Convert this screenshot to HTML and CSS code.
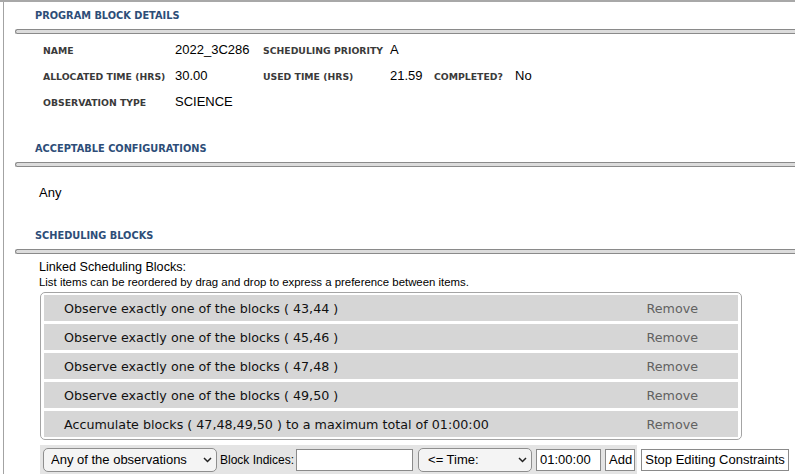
FILE: index.html
```html
<!doctype html>
<html>
<head>
<meta charset="utf-8">
<link rel="stylesheet" href="styles.css">
<title>Program Block</title>
</head>
<body>

<div id="page">
<div id="panel">

	<div class="sec-head">
		<h2>PROGRAM BLOCK DETAILS</h2>
		<div class="rule"></div>
	</div>
	<div id="details">
		<span class="lbl first">NAME</span>
		<span class="val">2022_3C286</span>
		<span class="lbl">SCHEDULING PRIORITY</span>
		<span class="val">A</span>

		<span class="lbl first">ALLOCATED TIME (HRS)</span>
		<span class="val">30.00</span>
		<span class="lbl">USED TIME (HRS)</span>
		<span class="val">21.59</span>
		<span class="lbl">COMPLETED?</span>
		<span class="val">No</span>

		<span class="lbl first">OBSERVATION TYPE</span>
		<span class="val">SCIENCE</span>
	</div>

	<div class="sec-head">
		<h2>ACCEPTABLE CONFIGURATIONS</h2>
		<div class="rule"></div>
	</div>
	<div id="configs">Any</div>

	<div class="sec-head">
		<h2>SCHEDULING BLOCKS</h2>
		<div class="rule"></div>
	</div>
	<div id="blocks">
		<div class="linked-title">Linked Scheduling Blocks:</div>
		<div class="linked-hint">List items can be reordered by drag and drop to express a preference between items.</div>

		<ul id="linked">
			<li><span>Observe exactly one of the blocks ( 43,44 )</span><a class="remove">Remove</a></li>
			<li><span>Observe exactly one of the blocks ( 45,46 )</span><a class="remove">Remove</a></li>
			<li><span>Observe exactly one of the blocks ( 47,48 )</span><a class="remove">Remove</a></li>
			<li><span>Observe exactly one of the blocks ( 49,50 )</span><a class="remove">Remove</a></li>
			<li><span>Accumulate blocks ( 47,48,49,50 ) to a maximum total of 01:00:00</span><a class="remove">Remove</a></li>
		</ul>

		<div id="constraint-bar">
			<div id="adder">
				<div class="sel sel-kind">
					<select><option>Any of the observations</option></select>
					<svg class="chev" width="9" height="6" viewBox="0 0 9 6"><path d="M1 1 L4.5 4.5 L8 1" fill="none" stroke="#222" stroke-width="1.5"/></svg>
				</div>
				<label class="idx-lbl">Block Indices:</label>
				<input type="text" class="idx">
				<div class="sel sel-op">
					<select><option>&lt;= Time:</option></select>
					<svg class="chev" width="9" height="6" viewBox="0 0 9 6"><path d="M1 1 L4.5 4.5 L8 1" fill="none" stroke="#222" stroke-width="1.5"/></svg>
				</div>
				<input type="text" class="time" value="01:00:00">
				<button class="btn add">Add</button>
			</div>
			<button class="btn stop">Stop Editing Constraints</button>
		</div>
	</div>

</div>
</div>

</body>
</html>
```

FILE: styles.css
```css
*
{
	margin:0;
	padding:0;
	box-sizing:border-box;
}
body
{
	font-family:"Liberation Sans", Arial, sans-serif;
	font-size:13px;
	color:#000;
	background:#fff;
}
#page
{
	border-top:2px solid #a8a8a8;
	height:474px;
	overflow:hidden;
}
#panel
{
	margin-left:3px;
	border-left:1px solid #a3a3a3;
	height:100%;
}

/* section headers */
.sec-head
{
	padding-top:8px;
}
.sec-head h2
{
	font-family:"DejaVu Sans", Verdana, sans-serif;
	font-size:9.8px;
	font-weight:bold;
	line-height:12px;
	color:#2d4d78;
	padding-left:31px;
}
.rule
{
	margin:7px 0 0 11px;
	height:5px;
	border:1px solid #8a8a8a;
	border-right:none;
	border-radius:3px 0 0 3px;
	background:#dcdcdc;
}

/* details grid */
#details
{
	display:grid;
	grid-template-columns:132px 88px 127px 44px 81px 1fr;
	grid-auto-rows:26px;
	align-items:baseline;
	margin:3px 0 20px 39px;
}
#details .first
{
	grid-column-start:1;
}
.lbl
{
	font-family:"DejaVu Sans", Verdana, sans-serif;
	font-size:9.3px;
	font-weight:bold;
	color:#3a3a3a;
	line-height:26px;
	white-space:nowrap;
}
.val
{
	line-height:26px;
	white-space:nowrap;
}

#configs
{
	padding-left:35px;
	line-height:16px;
	margin:18px 0 21px;
}

/* scheduling blocks */
#blocks
{
	padding-left:35px;
}
.linked-title
{
	font-size:12.6px;
	line-height:16px;
	margin-top:5px;
}
.linked-hint
{
	font-size:11.4px;
	line-height:13px;
	margin-top:1px;
}
#linked
{
	list-style:none;
	margin:3px 0 0 1px;
	width:702px;
	border:1px solid #a4a4a4;
	border-radius:5px;
	padding:2px 3px 2px;
}
#linked li
{
	display:flex;
	justify-content:space-between;
	align-items:center;
	height:26px;
	margin-bottom:3px;
	padding:0 40px 0 20px;
	background:#d6d6d6;
	font-family:"DejaVu Sans", Verdana, sans-serif;
	font-size:12.7px;
	color:#111;
}
#linked li:last-child
{
	margin-bottom:0;
}
#linked .remove
{
	color:#616161;
	cursor:pointer;
}

/* add constraint bar */
#constraint-bar
{
	display:flex;
	align-items:center;
	margin:5px 0 0 1px;
}
#adder
{
	display:flex;
	align-items:center;
	background:#e4e4e4;
	height:29px;
	padding:0 2px 0 3px;
}
.sel
{
	position:relative;
}
.sel select
{
	-webkit-appearance:none;
	appearance:none;
	font-family:"Liberation Sans", Arial, sans-serif;
	font-size:13px;
	color:#000;
	height:24px;
	border:1px solid #8e8e8e;
	border-radius:5px;
	background:#f4f4f4;
	padding-left:7px;
}
.sel-kind select
{
	width:174px;
}
.sel-op
{
	margin-left:5px;
}
.sel-op select
{
	width:114px;
	padding-left:9px;
}
.chev
{
	position:absolute;
	right:5px;
	top:9px;
	pointer-events:none;
}
.idx-lbl
{
	font-size:12px;
	margin:0 2px 0 3px;
}
input
{
	font-family:"Liberation Sans", Arial, sans-serif;
	font-size:13px;
	height:22px;
	border:1px solid #8a8a8a;
	background:#fff;
	padding:0 3px;
}
.idx
{
	width:117px;
}
.time
{
	width:65px;
	margin-left:4px;
}
.btn
{
	font-family:"Liberation Sans", Arial, sans-serif;
	font-size:13px;
	height:22px;
	border:1px solid #8a8a8a;
	background:#fff;
	color:#000;
	padding:0 3px;
}
.add
{
	width:30px;
	margin-left:4px;
}
.stop
{
	width:148px;
	margin-left:4px;
}
```
